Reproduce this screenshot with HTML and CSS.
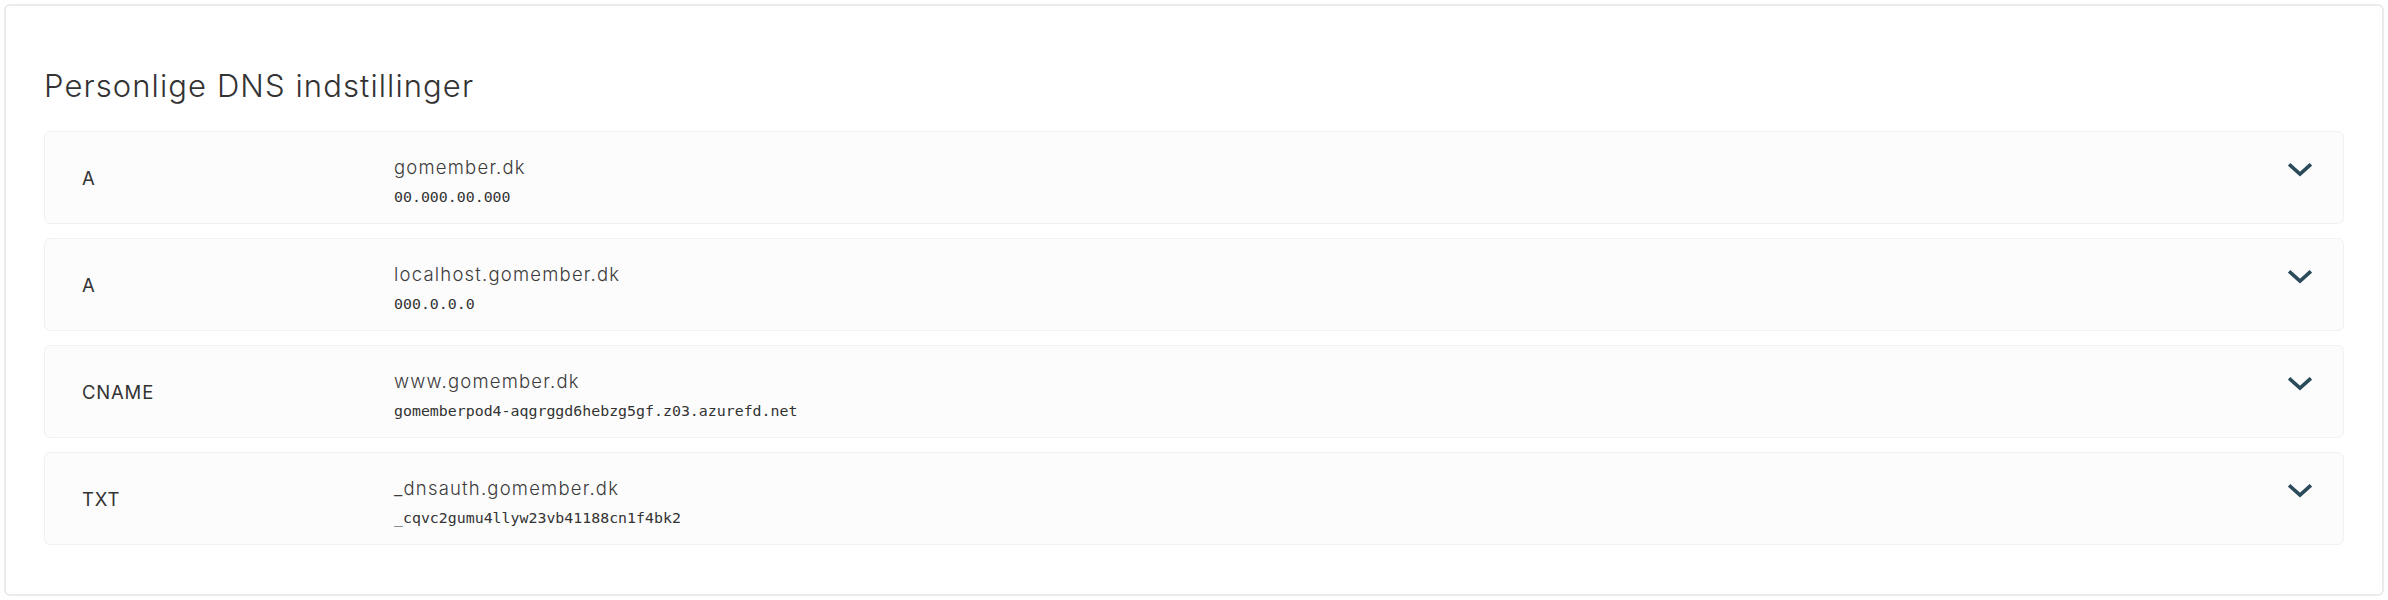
FILE: index.html
```html
<!DOCTYPE html>
<html lang="da">
<head>
    <meta charset="UTF-8">
    <title>Personlige DNS indstillinger</title>
    <link rel="stylesheet" href="styles.css">
</head>
<body>
    <div class="card">
        <div class="card-title">Personlige DNS indstillinger</div>
        <div class="dns-list">
            <div class="dns-row">
                <div class="dns-type">A</div>
                <div class="dns-value">
                    <div class="dns-host">gomember.dk</div>
                    <div class="dns-data">00.000.00.000</div>
                </div>
                <svg class="dns-toggle" viewBox="0 0 24 14" width="24" height="14"><polyline points="2.5,2.5 12,11 21.5,2.5" /></svg>
            </div>
            <div class="dns-row">
                <div class="dns-type">A</div>
                <div class="dns-value">
                    <div class="dns-host">localhost.gomember.dk</div>
                    <div class="dns-data">000.0.0.0</div>
                </div>
                <svg class="dns-toggle" viewBox="0 0 24 14" width="24" height="14"><polyline points="2.5,2.5 12,11 21.5,2.5" /></svg>
            </div>
            <div class="dns-row">
                <div class="dns-type">CNAME</div>
                <div class="dns-value">
                    <div class="dns-host">www.gomember.dk</div>
                    <div class="dns-data">gomemberpod4-aqgrggd6hebzg5gf.z03.azurefd.net</div>
                </div>
                <svg class="dns-toggle" viewBox="0 0 24 14" width="24" height="14"><polyline points="2.5,2.5 12,11 21.5,2.5" /></svg>
            </div>
            <div class="dns-row">
                <div class="dns-type">TXT</div>
                <div class="dns-value">
                    <div class="dns-host">_dnsauth.gomember.dk</div>
                    <div class="dns-data">_cqvc2gumu4llyw23vb41188cn1f4bk2</div>
                </div>
                <svg class="dns-toggle" viewBox="0 0 24 14" width="24" height="14"><polyline points="2.5,2.5 12,11 21.5,2.5" /></svg>
            </div>
        </div>
    </div>
</body>
</html>
```

FILE: styles.css
```css
body { font-family: Inter, 'Noto Sans', sans-serif; background: #fff; margin: 4px; color: #333; }
.card { border: 2px solid #ebebeb; border-radius: 6px; padding: 62px 38px 49px 38px; background: #fff; }
.card-title { font-size: 31px; font-weight: 300; line-height: 36px; letter-spacing: 1.1px; color: #333; margin-bottom: 27px; }
.dns-list { display: flex; flex-direction: column; gap: 14px; }
.dns-row { display: flex; align-items: flex-start; box-sizing: border-box; height: 93px; background: #fcfcfc; border: 1px solid #f1f1f1; border-radius: 6px; padding: 23px 31px 0 37px; }
.dns-type { width: 312px; flex-shrink: 0; align-self: center; margin-top: -23px; font-size: 18.5px; font-weight: 400; letter-spacing: 0.8px; color: #333; }
.dns-value { flex: 1; }
.dns-host { font-size: 18.5px; font-weight: 300; line-height: 24px; color: #3c3c3c; letter-spacing: 1.2px; }
.dns-data { margin-top: 8px; font-family: 'DejaVu Sans Mono', 'Liberation Mono', monospace; font-size: 14.9px; line-height: 20px; color: #333; }
.dns-toggle { margin-top: 8px; fill: none; stroke: #2b4a5a; stroke-width: 3.6; stroke-linecap: square; }
```
